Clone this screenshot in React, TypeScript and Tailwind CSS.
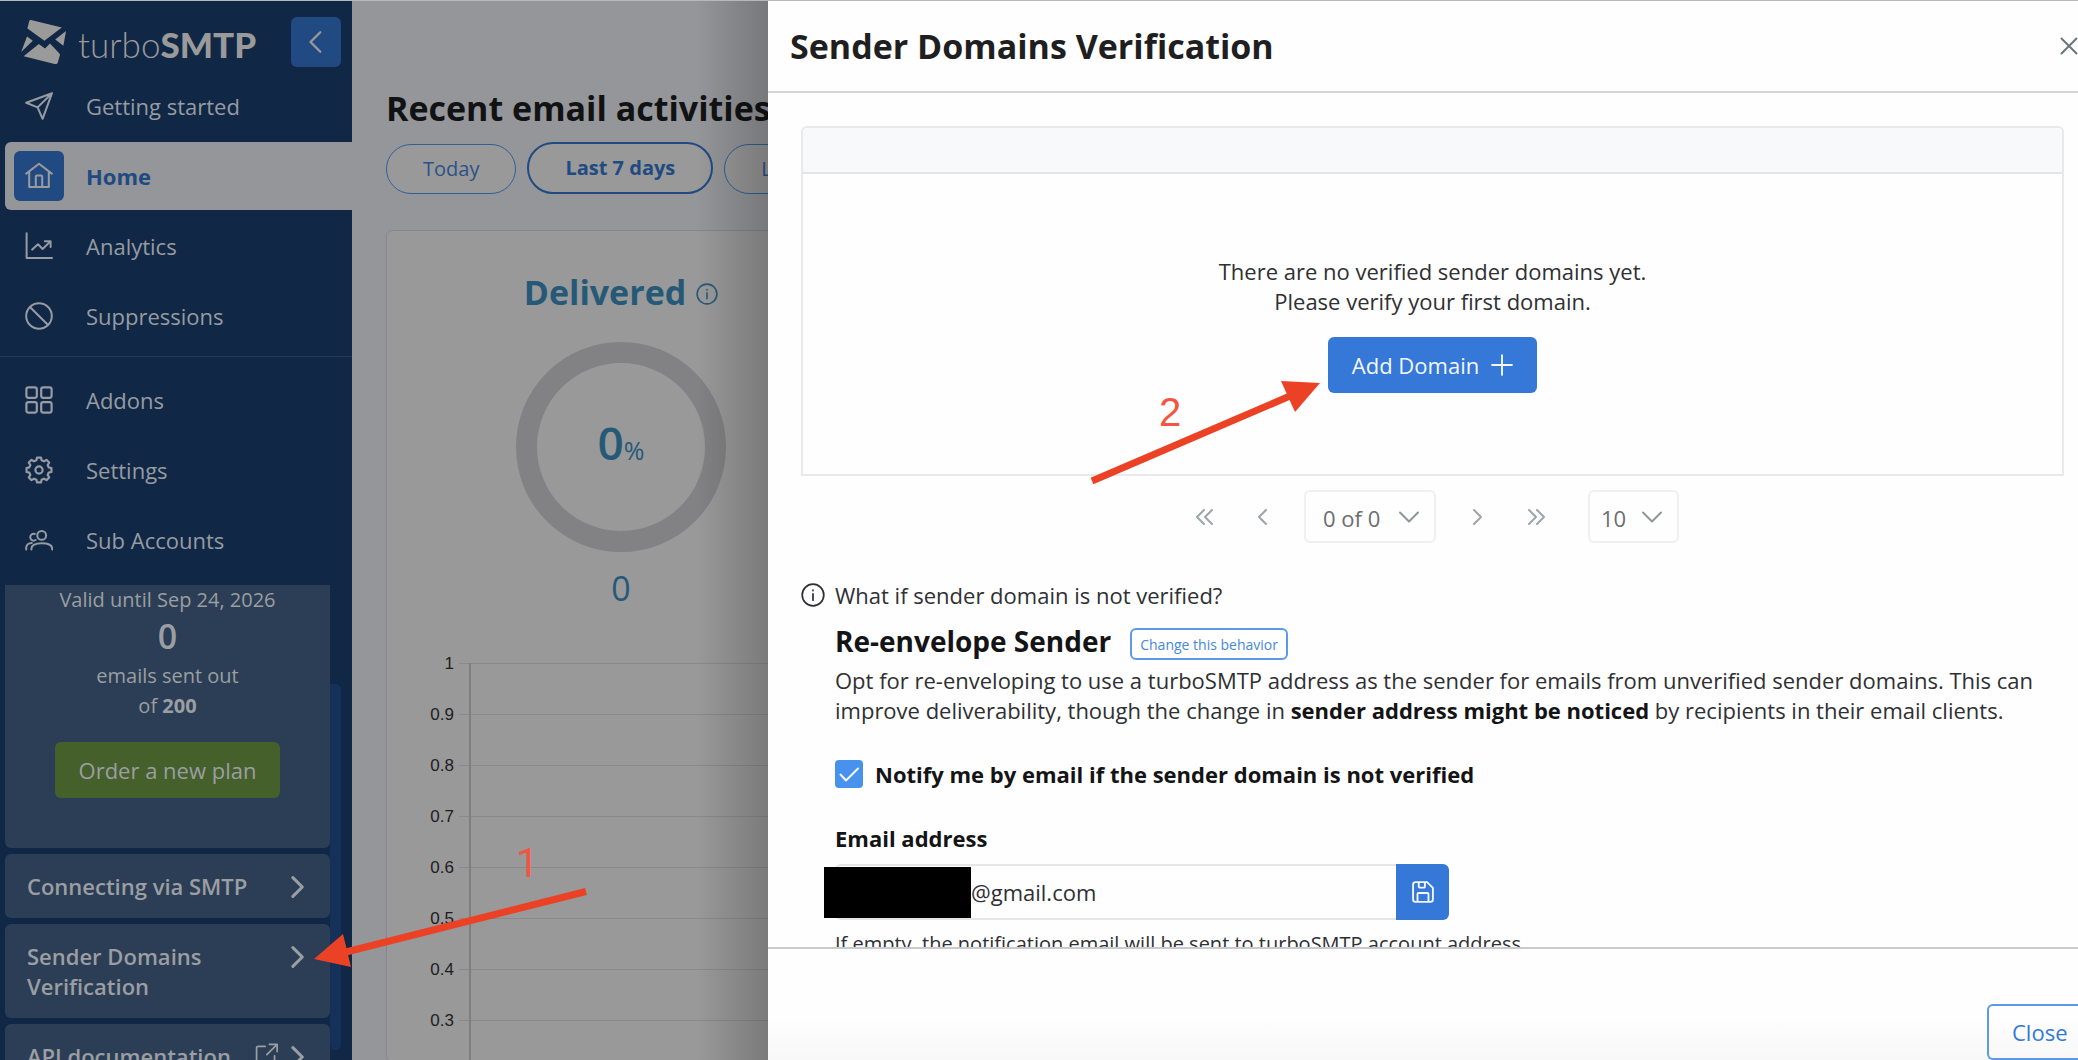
import { useId, useState } from "react";
import type { ReactNode } from "react";

function Icon({ size = 28, stroke = 2, children }: { size?: number; stroke?: number; children: ReactNode }) {
  return (
    <svg
      width={size}
      height={size}
      viewBox="0 0 28 28"
      fill="none"
      stroke="currentColor"
      strokeWidth={stroke}
      strokeLinecap="round"
      strokeLinejoin="round"
      aria-hidden="true"
      className="shrink-0"
    >
      {children}
    </svg>
  );
}

function gearPath() {
  const points: string[] = [];
  for (let i = 0; i < 8; i++) {
    const base = i * 45 - 90;
    for (const [offset, radius] of [[-15, 10], [-9, 12.6], [9, 12.6], [15, 10]]) {
      const a = ((base + offset) * Math.PI) / 180;
      points.push(`${(14 + radius * Math.cos(a)).toFixed(2)} ${(14 + radius * Math.sin(a)).toFixed(2)}`);
    }
  }
  return `M${points.join("L")}Z`;
}

const SendIcon = () => (
  <Icon><path d="M27 1.2 1.2 10.8 12.6 15.4 17.6 26.8ZM27 1.2 12.6 15.4" /></Icon>
);
const HomeIcon = () => (
  <Icon>
    <path d="M1.2 11.6 14 1.8 26.8 11.6M4.2 9.6V25H23.8V9.6M10.8 25V14.6a1 1 0 0 1 1-1h4.4a1 1 0 0 1 1 1V25" />
  </Icon>
);
const AnalyticsIcon = () => (
  <Icon><path d="M1.6 1.2V26H27M7.2 17.6 13 12.2 17.6 17 25.4 9.4M19.8 9.2H25.6V15" /></Icon>
);
const BanIcon = () => (
  <Icon><circle cx="14" cy="14" r="12.8" /><path d="M5.2 5.2 22.8 22.8" /></Icon>
);
const GridIcon = () => (
  <Icon stroke={2.2}>
    <rect x="1.4" y="1.4" width="10.4" height="10.4" rx="2" />
    <rect x="16.2" y="1.4" width="10.4" height="10.4" rx="2" />
    <rect x="1.4" y="16.2" width="10.4" height="10.4" rx="2" />
    <rect x="16.2" y="16.2" width="10.4" height="10.4" rx="2" />
  </Icon>
);
const GearIcon = () => (
  <Icon stroke={2.2}><path d={gearPath()} /><circle cx="14" cy="14" r="3.6" /></Icon>
);
const UsersIcon = () => (
  <Icon>
    <circle cx="16.7" cy="9.4" r="4.4" />
    <path d="M6.4 23.6v-.8c0-3.6 4-5.6 10.4-5.6s10.4 2 10.4 5.6v.8M9.8 8A3.4 3.4 0 1 0 10.6 14M1.2 23.6v-1.8c0-3 2.4-4.8 5.6-4.8" />
  </Icon>
);
const InfoIcon = ({ size }: { size: number }) => (
  <Icon size={size}><circle cx="14" cy="14" r="12.6" /><path d="M14 12.6V20M14 8.4v.4" /></Icon>
);
const ChevronRight = () => (
  <Icon size={24} stroke={3.6}><path d="M8 3 19 14 8 25" /></Icon>
);
const ChevronDown = () => (
  <svg width="20" height="12" viewBox="0 0 20 12" fill="none" stroke="#8f959b" strokeWidth="2" strokeLinecap="round" strokeLinejoin="round" aria-hidden="true">
    <path d="M1 1.5 10 10.5 19 1.5" />
  </svg>
);

const LogoMark = () => (
  <svg width="46" height="46" viewBox="0 0 46 46" fill="#9b9a9a" aria-hidden="true">
    <path d="M11 1.2C9.4.8 8.4 1.4 8 3L6.6 8.4C6.4 9.2 6.6 9.6 7.2 10L23.4 21.8 40.8 8.6Z" />
    <path d="M45 12 42.4 26.8 34.2 20.4Z" />
    <path d="M6 17.4 11.8 21.8.2 33Z" />
    <path d="M17.8 25 24 29.4 29 24.6 38.4 34.6C39 35.2 39 35.8 38.8 36.6L36.8 43.4C36.4 44.8 35.2 45.4 33.6 45L2.6 37.2Z" />
  </svg>
);

function NavItem({ label, icon, active }: { label: string; icon: ReactNode; active?: boolean }) {
  return (
    <li className="py-px pl-[5px]">
      <a
        href="#"
        aria-current={active ? "page" : undefined}
        className={
          active
            ? "flex h-[68px] items-center rounded-l-md bg-[#959699] pl-[9px] font-bold text-[#204a81]"
            : "flex h-[68px] items-center pl-[9px] text-[#979ba2]"
        }
      >
        <span
          className={
            active
              ? "flex size-[50px] items-center justify-center rounded-md bg-[#204a81] text-[#9b9b9b]"
              : "flex size-[50px] items-center justify-center"
          }
        >
          {icon}
        </span>
        <span className="pl-[22px]">{label}</span>
      </a>
    </li>
  );
}

function SideLink({ children, external }: { children: ReactNode; external?: boolean }) {
  return (
    <a href="#" className="flex items-start justify-between gap-2 rounded-md bg-[#2b3e55] py-[17px] pr-[20px] pl-[22px] font-semibold">
      <span className="grow">{children}</span>
      {external && (
        <span className="pt-0.5">
          <Icon size={24}><path d="M13 4H5a2 2 0 0 0-2 2V25a2 2 0 0 0 2 2H22a2 2 0 0 0 2-2V15M18 1.5H27V10M27 1.5 15 13.5" /></Icon>
        </span>
      )}
      <span className="pt-1"><ChevronRight /></span>
    </a>
  );
}

function Sidebar() {
  return (
    <aside className="flex w-[352px] shrink-0 flex-col bg-[#102845] text-[#9b9ea3]">
      <div className="flex h-[70px] shrink-0 items-start justify-between pt-4 pr-[11px] pl-[21px]">
        <a href="#" className="flex items-center gap-[11px] pt-0.5">
          <LogoMark />
          <span className="pt-1 font-['Lato'] text-[35px] leading-[42px] text-[#9b9a9a]">
            <span className="font-light">turbo</span>
            <span className="font-black">SMTP</span>
          </span>
        </a>
        <button type="button" aria-label="Collapse menu" className="flex size-[50px] items-center justify-center rounded-md bg-[#204a81] text-[#9b9b9b]">
          <Icon size={24} stroke={2.6}><path d="M19 2.6 7.6 14 19 25.4" /></Icon>
        </button>
      </div>
      <nav aria-label="Main">
        <ul>
          <NavItem label="Getting started" icon={<SendIcon />} />
          <NavItem label="Home" icon={<HomeIcon />} active />
          <NavItem label="Analytics" icon={<AnalyticsIcon />} />
          <NavItem label="Suppressions" icon={<BanIcon />} />
        </ul>
        <ul className="mt-[5px] border-t border-[#263b57] pt-2">
          <NavItem label="Addons" icon={<GridIcon />} />
          <NavItem label="Settings" icon={<GearIcon />} />
          <NavItem label="Sub Accounts" icon={<UsersIcon />} />
        </ul>
      </nav>
      <div className="mt-2.5 flex min-h-0 grow justify-between overflow-hidden pr-[11px] pl-[5px]">
        <div className="flex w-[325px] flex-col gap-[6px]">
          <section className="flex h-[263px] shrink-0 flex-col items-center rounded-b-md bg-[#2b3e55] text-[20px] leading-[30px]">
            <p>Valid until Sep 24, 2026</p>
            <p className="pb-1 text-[34px] leading-[42px] font-semibold">0</p>
            <p>emails sent out</p>
            <p>of <b>200</b></p>
            <button type="button" className="mt-[21px] h-14 rounded-md bg-[#45602b] px-6 text-[22px]">Order a new plan</button>
          </section>
          <SideLink>Connecting via SMTP</SideLink>
          <SideLink>Sender Domains Verification</SideLink>
          <SideLink external>API documentation</SideLink>
        </div>
        <div className="mt-[99px] h-[366px] w-[11px] rounded-b-full rounded-tr-full bg-[#15315a]" />
      </div>
    </aside>
  );
}

const TICKS = ["1", "0.9", "0.8", "0.7", "0.6", "0.5", "0.4", "0.3"];

function DeliveredChart() {
  return (
    <svg width="468" height="410" viewBox="0 0 468 410" role="img" aria-label="Delivered emails per day" className="shrink-0">
      <g stroke="#8a8a8b" strokeWidth="1">
        {TICKS.map((tick, i) => (
          <line key={tick} x1="72" x2="450" y1={12.5 + i * 51} y2={12.5 + i * 51} />
        ))}
      </g>
      <line x1="83" x2="83" y1="12" y2="410" stroke="#7f7f80" strokeWidth="2" />
      <g fontFamily="Liberation Sans, Arial, sans-serif" fontSize="17" fill="#1d1d1f" textAnchor="end">
        {TICKS.map((tick, i) => (
          <text key={tick} x="67" y={18 + i * 51}>{tick}</text>
        ))}
      </g>
    </svg>
  );
}

function Dashboard() {
  const pill = "h-[50px] shrink-0 rounded-full border border-[#315f96] bg-[#999999] px-9 text-[20px] text-[#2a5288]";
  return (
    <main className="relative flex w-[416px] shrink-0 flex-col overflow-hidden bg-[#959699] pt-[82px] pl-[34px]">
      <h1 className="text-[34px] leading-[50px] font-bold whitespace-nowrap text-[#111214]">Recent email activities</h1>
      <div className="mt-[9px] flex items-end gap-[11px] whitespace-nowrap">
        <button type="button" className={pill}>Today</button>
        <button type="button" aria-pressed="true" className="h-[52px] shrink-0 rounded-full border-2 border-[#204a81] bg-[#999999] px-9 text-[20px] font-bold text-[#204a81]">Last 7 days</button>
        <button type="button" className={pill}>Last 30 days</button>
      </div>
      <section className="mt-9 flex w-[470px] grow flex-col items-center rounded-md border border-[#868789] bg-[#999999] text-[#265978]">
        <div className="flex items-center gap-2.5 pt-9">
          <h2 className="text-[34px] leading-[50px] font-bold">Delivered</h2>
          <span className="pt-1"><InfoIcon size={22} /></span>
        </div>
        <div className="mt-[25px] flex size-[210px] shrink-0 items-center justify-center rounded-full border-[21px] border-[#828284]">
          <span className="flex items-baseline pb-2.5">
            <span className="text-[46px] leading-[50px] font-semibold">0</span>
            <span className="text-[25px]">%</span>
          </span>
        </div>
        <p className="mt-[11px] text-[34px] leading-[50px]">0</p>
        <div className="mt-[38px]"><DeliveredChart /></div>
      </section>
      <div className="pointer-events-none absolute inset-y-0 right-0 w-[72px] bg-linear-to-r from-transparent to-black/20" />
    </main>
  );
}

function PageArrow({ label, d, width }: { label: string; d: string; width: number }) {
  return (
    <button type="button" aria-label={label} className="flex h-[53px] w-[59px] items-center justify-center">
      <svg width={width} height="16" viewBox={`0 0 ${width} 16`} fill="none" stroke="#9fa4a9" strokeWidth="2" strokeLinecap="round" strokeLinejoin="round" aria-hidden="true">
        <path d={d} />
      </svg>
    </button>
  );
}

function Picker({ label, value, className }: { label: string; value: string; className: string }) {
  return (
    <div className="grid items-center">
      <select aria-label={label} className={className} defaultValue={value}>
        <option>{value}</option>
      </select>
      <span className="pointer-events-none col-start-1 row-start-1 justify-self-end pr-[17px]"><ChevronDown /></span>
    </div>
  );
}

function Drawer() {
  const notifyId = useId();
  const emailId = useId();
  const [notify, setNotify] = useState(true);
  return (
    <div role="dialog" aria-labelledby="drawer-title" className="flex min-w-0 grow flex-col bg-[#fefefe] text-[#2f3033]">
      <header className="flex h-[92px] shrink-0 items-center justify-between border-b-2 border-[#d4d4dc] pl-[22px]">
        <h2 id="drawer-title" className="text-[34px] leading-[50px] font-bold text-[#1f1f22]">Sender Domains Verification</h2>
        <button type="button" aria-label="Close panel" className="flex h-[50px] w-[18px] items-center justify-center">
          <svg width="18" height="18" viewBox="0 0 18 18" fill="none" stroke="#6c757d" strokeWidth="2" strokeLinecap="round" aria-hidden="true">
            <path d="M1.5 1.5 16.5 16.5M16.5 1.5 1.5 16.5" />
          </svg>
        </button>
      </header>
      <div className="min-h-0 grow overflow-hidden pt-[33px] pr-[14px] pl-[33px]">
        <table className="w-full border-separate border-spacing-0 rounded-t-md border-2 border-[#e9e9ea]">
          <thead>
            <tr><th scope="col" aria-label="Domain" className="h-[46px] rounded-t-md border-b-2 border-[#e5e5e7] bg-[#f8f9fb]" /></tr>
          </thead>
          <tbody>
            <tr>
              <td className="h-[300px] text-center align-middle leading-[30px] text-[#2f3033]">
                <p>There are no verified sender domains yet.<br />Please verify your first domain.</p>
                <button type="button" className="mt-[21px] inline-flex h-14 items-center gap-3 rounded-md bg-[#3578d8] px-6 text-[#f3f7fd]">
                  Add Domain
                  <Icon size={22} stroke={2.4}><path d="M14 1.4V26.6M1.4 14H26.6" /></Icon>
                </button>
              </td>
            </tr>
          </tbody>
        </table>
        <div className="mt-[14px] flex items-center justify-center pr-3 text-[#6b6d70]">
          <PageArrow label="First page" d="M9 1 2 8 9 15M17 1 10 8 17 15" width={18} />
          <PageArrow label="Previous page" d="M9 1 2 8 9 15" width={11} />
          <div className="px-3">
            <Picker label="Page" value="0 of 0" className="col-start-1 row-start-1 h-[53px] w-[132px] appearance-none rounded-md border-2 border-[#f0f0f1] bg-transparent pt-0.5 pl-[17px]" />
          </div>
          <PageArrow label="Next page" d="M2 1 9 8 2 15" width={11} />
          <PageArrow label="Last page" d="M1 1 8 8 1 15M9 1 16 8 9 15" width={18} />
          <div className="pl-[22px]">
            <Picker label="Rows per page" value="10" className="col-start-1 row-start-1 h-[53px] w-[91px] appearance-none rounded-md border-2 border-[#f0f0f1] bg-transparent pt-0.5 pl-[11px]" />
          </div>
        </div>
        <section className="mt-[37px]">
          <p className="flex items-center gap-2.5 leading-[30px]"><InfoIcon size={24} />What if sender domain is not verified?</p>
          <div className="pl-[34px]">
            <div className="mt-2.5 flex items-center gap-[19px]">
              <h3 className="text-[28px] leading-[42px] font-bold text-[#141416]">Re-envelope Sender</h3>
              <button type="button" className="mt-1.5 h-8 rounded-md border-2 border-[#5c9ae6] px-[8px] text-[14px] text-[#4688dd]">Change this behavior</button>
            </div>
            <p className="mt-[3px] leading-[30px]">
              Opt for re-enveloping to use a turboSMTP address as the sender for emails from unverified sender domains. This can
              improve deliverability, though the change in <b className="text-[#141416]">sender address might be noticed</b> by recipients in their email clients.
            </p>
            <div className="mt-[34px] flex items-center gap-3">
              <span className="grid size-7">
                <input id={notifyId} type="checkbox" checked={notify} onChange={(e) => setNotify(e.target.checked)} className="peer col-start-1 row-start-1 size-7 appearance-none rounded border-2 border-[#4792ec] checked:bg-[#4792ec]" />
                <svg viewBox="0 0 28 28" fill="none" stroke="#f5f9fe" strokeWidth="2" strokeLinecap="round" strokeLinejoin="round" aria-hidden="true" className="pointer-events-none invisible col-start-1 row-start-1 peer-checked:visible">
                  <path d="M5.5 14.5 11 20.5 23 8.5" />
                </svg>
              </span>
              <label htmlFor={notifyId} className="leading-[30px] font-bold text-[#141416]">Notify me by email if the sender domain is not verified</label>
            </div>
            <label htmlFor={emailId} className="mt-[34px] block leading-[30px] font-bold text-[#141416]">Email address</label>
            <div className="relative mt-[11px] flex h-14">
              <input id={emailId} type="email" defaultValue="@gmail.com" className="w-[561px] rounded-l-md border-2 border-r-0 border-[#e6e6e6] bg-transparent pl-[134px] text-[#2f3033]" />
              <button type="button" aria-label="Save" className="flex w-[53px] items-center justify-center rounded-r-md bg-[#3578d8] text-[#f3f7fd]">
                <Icon size={22} stroke={2.4}>
                  <path d="M4.4 1.4H19.2L26.6 8.8V23.6a3 3 0 0 1-3 3H4.4a3 3 0 0 1-3-3V4.4a3 3 0 0 1 3-3ZM7 26.2V16.6a1.4 1.4 0 0 1 1.4-1.4H19.6a1.4 1.4 0 0 1 1.4 1.4V26.2M8.6 1.6V7.4a1 1 0 0 0 1 1h5.8a1 1 0 0 0 1-1V1.6" />
                </Icon>
              </button>
              <span className="absolute top-[3px] -left-[11px] h-[51px] w-[147px] bg-black" />
            </div>
            <p className="mt-[9px] text-[20px] leading-[30px] whitespace-nowrap">If empty, the notification email will be sent to turboSMTP account address</p>
          </div>
        </section>
      </div>
      <footer className="flex h-[113px] shrink-0 justify-end overflow-hidden border-t-2 border-[#c9c9d0] bg-linear-to-b from-[#fefefe] from-60% to-[#f8f8f8] pt-[55px]">
        <button type="button" className="h-14 w-[91px] rounded-l-md border-2 border-r-0 border-[#5c9ae6] pl-[23px] text-left text-[#3578d8]">Close</button>
      </footer>
    </div>
  );
}

function Annotations() {
  return (
    <div className="pointer-events-none absolute inset-0 text-[40px] leading-[46px] text-[#f55442]">
      <svg width="280" height="90" viewBox="310 885 280 90" className="absolute top-[884px] left-[310px]" aria-hidden="true">
        <path d="M586 891.5 346 952" stroke="#eb4226" strokeWidth="7" />
        <path d="M314 959 343 934 351 967Z" fill="#eb4226" />
      </svg>
      <span className="absolute top-[840px] left-[516px] font-['Roboto',sans-serif]">1</span>
      <svg width="240" height="115" viewBox="1085 375 240 115" className="absolute top-[374px] left-[1085px]" aria-hidden="true">
        <path d="M1092 481 1290 396" stroke="#eb4226" strokeWidth="7" />
        <path d="M1320 383 1281 381 1295 412Z" fill="#eb4226" />
      </svg>
      <span className="absolute top-[388px] left-[1159px] font-['Liberation_Sans',sans-serif]">2</span>
    </div>
  );
}

export default function App() {
  return (
    <div className="relative flex h-screen overflow-hidden border-t border-[#b5b9be] font-['Open_Sans','Noto_Sans',sans-serif] text-[22px] leading-[30px]">
      <Sidebar />
      <Dashboard />
      <Drawer />
      <Annotations />
    </div>
  );
}
